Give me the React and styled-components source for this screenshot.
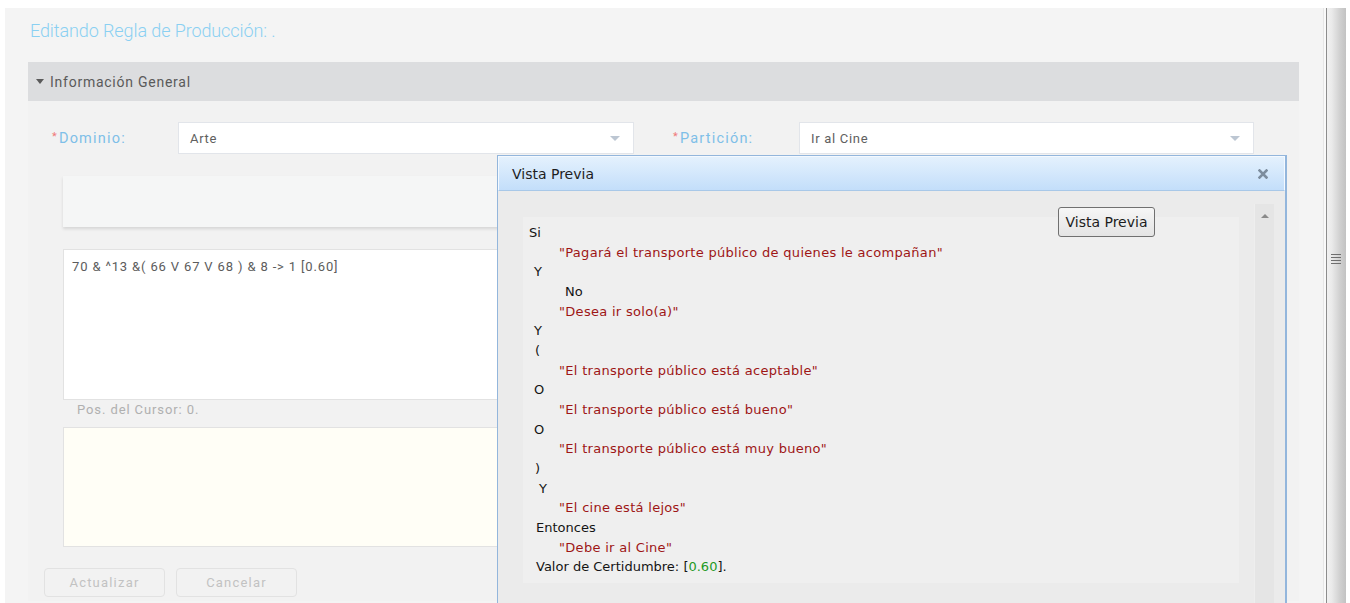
import React from 'react'
import styled, { createGlobalStyle } from 'styled-components'

const GlobalStyle = createGlobalStyle`
  html, body {
    margin: 0;
    padding: 0;
    background: #ffffff;
    overflow: hidden;
    font-family: Roboto, "Liberation Sans", sans-serif;
  }
  * { box-sizing: border-box; }
`

const Page = styled.div`
  position: relative;
  display: flex;
  height: 603px;
  padding-top: 8px;
`

const MainPanel = styled.div`
  margin-left: 5px;
  width: 1318px;
  height: 595px;
  padding: 0 24px 0 23px;
  background: #f4f4f4;
  overflow: hidden;
`

const Title = styled.h1`
  margin: 0;
  padding: 11px 0 0 2px;
  height: 35px;
  line-height: 24px;
  font-size: 18px;
  font-weight: 300;
  color: #8ad0f2;
  letter-spacing: -0.1px;
`

const SectionHeader = styled.div`
  margin-top: 19px;
  height: 39px;
  display: flex;
  align-items: center;
  padding-left: 8px;
  background: #dcdddf;
  font-size: 14px;
  color: #5a5a5a;
  letter-spacing: 0.75px;
`

const Caret = styled.span`
  width: 0;
  height: 0;
  margin-right: 6px;
  border-left: 4px solid transparent;
  border-right: 4px solid transparent;
  border-top: 5px solid #5a5a5a;
`

const SectionBody = styled.div`
  background: #f2f2f2;
  padding-top: 21px;
  height: 500px;
`

const FieldRow = styled.div`
  display: flex;
  align-items: center;
  padding-left: 24px;
`

const Label = styled.label`
  width: 126px;
  margin-left: ${p => p.$gap || 0}px;
  font-size: 14.5px;
  color: #7ebfe8;
  letter-spacing: 1.2px;
`

const Req = styled.span`
  color: #f07a7a;
  font-size: 11px;
  margin-right: 1px;
  vertical-align: 3px;
`

const Select = styled.div`
  width: ${p => p.$w}px;
  height: 32px;
  display: flex;
  align-items: center;
  justify-content: space-between;
  padding: 0 11px;
  background: #ffffff;
  border: 1px solid #e2e5ea;
  font-size: 13px;
  color: #606060;
  letter-spacing: 0.7px;
`

const DropArrow = styled.span`
  width: 0;
  height: 0;
  margin-right: 2px;
  border-left: 5px solid transparent;
  border-right: 5px solid transparent;
  border-top: 5px solid #bcc6d2;
`

const EditorColumn = styled.div`
  margin-left: 35px;
  width: 1191px;
`

const ToolStrip = styled.div`
  margin-top: 22px;
  height: 51px;
  background: #f5f6f6;
  box-shadow: 0 2px 3px rgba(0, 0, 0, 0.12);
`

const RuleText = styled.div`
  margin-top: 22px;
  height: 151px;
  padding: 9px 8px;
  background: #ffffff;
  border: 1px solid #e2e2e2;
  font-size: 13px;
  color: #5c5c5c;
  letter-spacing: 0.85px;
`

const CursorInfo = styled.div`
  height: 27px;
  line-height: 20px;
  padding-left: 14px;
  font-size: 13px;
  color: #b0b0b0;
  letter-spacing: 0.9px;
`

const MessageBox = styled.div`
  height: 120px;
  background: #fffef6;
  border: 1px solid #e2e2e2;
`

const ButtonBar = styled.div`
  display: flex;
  gap: 11px;
  margin: 21px 0 0 16px;
`

const FlatButton = styled.button`
  width: 121px;
  height: 29px;
  background: transparent;
  border: 1px solid #e2e2e2;
  border-radius: 4px;
  font-family: Roboto, "Liberation Sans", sans-serif;
  font-size: 13px;
  letter-spacing: 1.2px;
  color: #c2c2c2;
`

const Gutter = styled.div`
  width: 3px;
  background: #f9f9f9;
  border-left: 1px solid #e6e6e6;
`

const SplitBar = styled.div`
  width: 20px;
  height: 595px;
  padding: 246px 0 0 4px;
  border-left: 1px solid #8c8c8c;
  background: linear-gradient(to right, #f1f1f1 0%, #eaeaea 25%, #cfcfcf 70%, #c2c2c2 100%);
`

const Grip = styled.div`
  width: 10px;
  height: 11px;
  background: repeating-linear-gradient(to bottom, #6f6f6f 0 1px, transparent 1px 3px);
`

/* preview dialog */

const Dialog = styled.div`
  position: absolute;
  left: 497px;
  top: 155px;
  width: 790px;
  height: 470px;
  display: flex;
  flex-direction: column;
  border: 1px solid #93b6dc;
  border-right-width: 2px;
  background: #ebebeb;
  font-family: "DejaVu Sans", Verdana, sans-serif;
`

const DialogHeader = styled.div`
  height: 35px;
  display: flex;
  align-items: center;
  justify-content: space-between;
  padding: 0 16px 0 13px;
  background: linear-gradient(to bottom, #e4f1fd, #c3defa);
  border: 1px solid #f4f9ff;
  border-bottom: 1px solid #a8c8e8;
  font-size: 14px;
  color: #1e1e1e;
`

const DialogBody = styled.div`
  position: relative;
  flex: 1;
  display: flex;
`

const PreviewPane = styled.div`
  margin: 26px 0 0 25px;
  width: 716px;
  height: 366px;
  padding-top: 6px;
  background: #efefef;
  font-size: 13px;
  line-height: 19.65px;
`

const Line = styled.div`
  padding-left: ${p => p.$indent}px;
  color: ${p => (p.$quote ? '#9e1616' : '#141414')};
  letter-spacing: ${p => (p.$quote ? '0.3px' : '0')};
  white-space: pre;
`

const Green = styled.span`
  color: #1f9a1f;
`

const ScrollTrack = styled.div`
  margin: 13px 11px 0 15px;
  width: 20px;
  background: #e5e5e5;
  border-left: 1px solid #eeeeee;
  display: flex;
  justify-content: center;
  padding-top: 10px;
`

const UpArrow = styled.span`
  width: 0;
  height: 0;
  border-left: 4px solid transparent;
  border-right: 4px solid transparent;
  border-bottom: 4px solid #8a8a8a;
`

const PreviewButton = styled.button`
  position: absolute;
  left: 560px;
  top: 16px;
  width: 97px;
  height: 30px;
  border: 1px solid #707070;
  border-radius: 3px;
  background: linear-gradient(to bottom, #f6f6f6, #e4e4e4);
  font-family: "DejaVu Sans", Verdana, sans-serif;
  font-size: 14px;
  color: #1c1c1c;
  padding: 0;
`

const previewLines = [
  { t: 'Si', i: 6 },
  { t: '"Pagará el transporte público de quienes le acompañan"', i: 36, q: true },
  { t: 'Y', i: 11 },
  { t: 'No', i: 42 },
  { t: '"Desea ir solo(a)"', i: 36, q: true },
  { t: 'Y', i: 11 },
  { t: '(', i: 12 },
  { t: '"El transporte público está aceptable"', i: 36, q: true },
  { t: 'O', i: 11 },
  { t: '"El transporte público está bueno"', i: 36, q: true },
  { t: 'O', i: 11 },
  { t: '"El transporte público está muy bueno"', i: 36, q: true },
  { t: ')', i: 12 },
  { t: 'Y', i: 16 },
  { t: '"El cine está lejos"', i: 36, q: true },
  { t: 'Entonces', i: 13 },
  { t: '"Debe ir al Cine"', i: 36, q: true },
]

function CloseIcon() {
  return (
    <svg width="10" height="10" viewBox="0 0 10 10">
      <path d="M1.5 1.5 L8.5 8.5 M8.5 1.5 L1.5 8.5" stroke="#7d8d9e" strokeWidth="2.6" strokeLinecap="square" />
    </svg>
  )
}

export default function App() {
  return (
    <>
      <GlobalStyle />
      <Page>
        <MainPanel>
          <Title>Editando Regla de Producción: .</Title>
          <SectionHeader>
            <Caret />
            Información General
          </SectionHeader>
          <SectionBody>
            <FieldRow>
              <Label><Req>*</Req>Dominio:</Label>
              <Select $w={456}>Arte<DropArrow /></Select>
              <Label $gap={39}><Req>*</Req>Partición:</Label>
              <Select $w={455}>Ir al Cine<DropArrow /></Select>
            </FieldRow>
            <EditorColumn>
              <ToolStrip />
              <RuleText>70 &amp; ^13 &amp;( 66 V 67 V 68 ) &amp; 8 -&gt; 1 [0.60]</RuleText>
              <CursorInfo>Pos. del Cursor: 0.</CursorInfo>
              <MessageBox />
            </EditorColumn>
            <ButtonBar>
              <FlatButton>Actualizar</FlatButton>
              <FlatButton>Cancelar</FlatButton>
            </ButtonBar>
          </SectionBody>
        </MainPanel>
        <Gutter />
        <SplitBar>
          <Grip />
        </SplitBar>

        <Dialog>
          <DialogHeader>
            Vista Previa
            <CloseIcon />
          </DialogHeader>
          <DialogBody>
            <PreviewPane>
              {previewLines.map((l, k) => (
                <Line key={k} $indent={l.i} $quote={l.q}>{l.t}</Line>
              ))}
              <Line $indent={13}>Valor de Certidumbre: [<Green>0.60</Green>].</Line>
            </PreviewPane>
            <ScrollTrack>
              <UpArrow />
            </ScrollTrack>
            <PreviewButton>Vista Previa</PreviewButton>
          </DialogBody>
        </Dialog>
      </Page>
    </>
  )
}
